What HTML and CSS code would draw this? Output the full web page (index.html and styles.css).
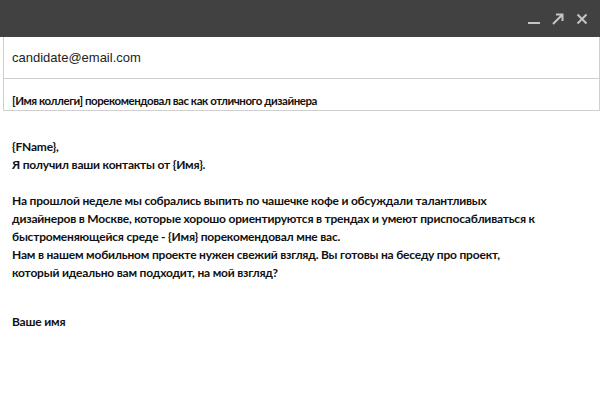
FILE: index.html
```html
<!DOCTYPE html>
<html lang="ru">
<head>
  <meta charset="UTF-8">
  <title>Новое сообщение</title>
  <link rel="stylesheet" href="styles.css">
</head>
<body>

  <!-- Compose window -->
  <div class="compose">
    <div class="titlebar">
      <span class="tb-btn">
        <svg width="12" height="12" viewBox="0 0 12 12"><rect x="0" y="9" width="12" height="2" fill="#c4c4c4"/></svg>
      </span>
      <span class="tb-btn">
        <svg width="12" height="12" viewBox="0 0 12 12"><path d="M1 11 L10 2 M4 1.5 H10.5 V8" stroke="#c4c4c4" stroke-width="2" fill="none"/></svg>
      </span>
      <span class="tb-btn">
        <svg width="12" height="12" viewBox="0 0 12 12"><path d="M1.5 1.5 L10.5 10.5 M10.5 1.5 L1.5 10.5" stroke="#c4c4c4" stroke-width="2" fill="none"/></svg>
      </span>
    </div>

    <div class="field to">candidate@email.com</div>
    <div class="field subject">[Имя коллеги] порекомендовал вас как отличного дизайнера</div>

    <div class="message">
      <p>{FName},<br>Я получил ваши контакты от {Имя}.</p>
      <p>На прошлой неделе мы собрались выпить по чашечке кофе и обсуждали талантливых<br>
        дизайнеров в Москве, которые хорошо ориентируются в трендах и умеют приспосабливаться к<br>
        быстроменяющейся среде - {Имя} порекомендовал мне вас.<br>
        Нам в нашем мобильном проекте нужен свежий взгляд. Вы готовы на беседу про проект,<br>
        который идеально вам подходит, на мой взгляд?</p>
      <p class="sign">Ваше имя</p>
    </div>
  </div>

</body>
</html>
```

FILE: styles.css
```css
body {
  margin: 0;
  background-color: white;
  font-family: "Liberation Sans", Arial, sans-serif;
}

.compose {
  width: 600px;
}

.titlebar {
  height: 37px;
  background: #414141;
  display: flex;
  justify-content: flex-end;
  align-items: center;
  gap: 12px;
  padding-right: 12px;
}

.tb-btn {
  display: flex;
  width: 12px;
  height: 12px;
}

.field {
  margin-left: 3px;
  border-left: 1px solid #cfcfcf;
  border-right: 1px solid #cfcfcf;
  border-bottom: 1px solid #cfcfcf;
  padding-left: 8px;
  display: flex;
  align-items: center;
  color: #222;
}

.to {
  height: 41px;
  font-size: 13px;
}

.subject {
  height: 32px;
  box-sizing: border-box;
  padding-top: 11px;
  font-family: Lato, sans-serif;
  font-size: 11.5px;
  font-weight: 700;
  letter-spacing: -0.45px;
  color: #111;
}

.message {
  padding: 27px 12px 16px;
  font-family: Lato, sans-serif;
  font-size: 12px;
  font-weight: 700;
  letter-spacing: -0.2px;
  line-height: 18px;
  color: #111;
}

.message p {
  margin: 0 0 18px;
}

.message .sign {
  margin-top: 31px;
}
```
